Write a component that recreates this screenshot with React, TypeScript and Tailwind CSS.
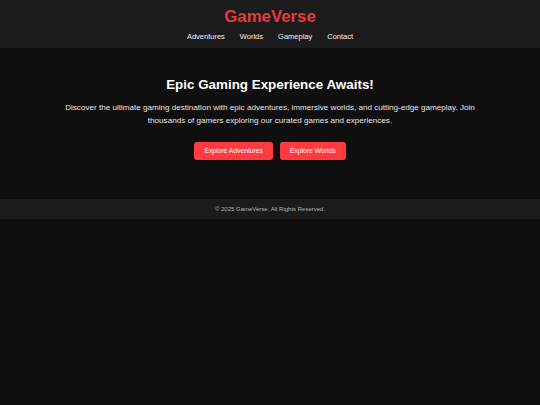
export default function App() {
  const links = ["Adventures", "Worlds", "Gameplay", "Contact"];
  return (
    <div
      className="min-h-[405px] bg-[#0f0f0f] text-white"
      style={{ fontFamily: '"Liberation Sans", Arial, sans-serif' }}
    >
      <header className="flex h-[48px] flex-col items-center bg-[#1b1b1b] pt-[7px]">
        <h1 className="text-[16.8px] font-bold leading-[20px] text-[#e83a3a]">GameVerse</h1>
        <nav className="mt-[5px] flex gap-[15px] text-[7.5px] leading-[10px] text-[#f0f0f0]">
          {links.map((l) => (
            <a key={l} href="#">
              {l}
            </a>
          ))}
        </nav>
      </header>

      <main className="flex flex-col items-center px-[20px] pb-[39px] pt-[29px] text-center">
        <h2 className="text-[13.4px] font-bold leading-[16px]">Epic Gaming Experience Awaits!</h2>
        <p className="mt-[8px] max-w-[440px] text-[8.1px] leading-[13px] text-[#e6e6e6]">
          Discover the ultimate gaming destination with epic adventures, immersive worlds, and
          cutting-edge gameplay. Join thousands of gamers exploring our curated games and
          experiences.
        </p>
        <div className="mt-[15px] flex gap-[7px]">
          <button className="h-[18px] rounded-[3px] bg-[#ff3b3f] px-[10px] text-[6.75px] text-white">
            Explore Adventures
          </button>
          <button className="h-[18px] rounded-[3px] bg-[#ff3b3f] px-[10px] text-[6.75px] text-white">
            Explore Worlds
          </button>
        </div>
      </main>

      <footer className="flex h-[20px] items-center justify-center bg-[#1b1b1b] text-[6px] text-[#b5b5b5]">
        © 2025 GameVerse. All Rights Reserved.
      </footer>
    </div>
  );
}
